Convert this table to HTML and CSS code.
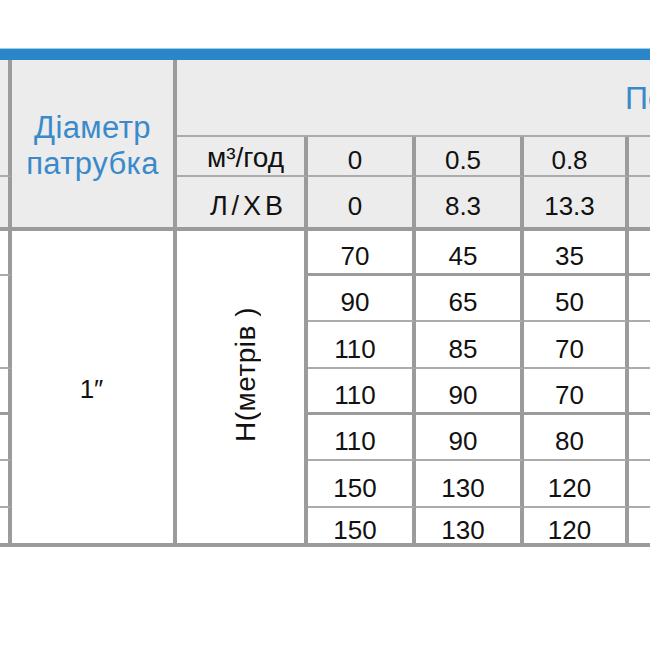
FILE: index.html
```html
<!DOCTYPE html>
<html lang="uk">
<head>
<meta charset="utf-8">
<title>Таблиця характеристик</title>
<link rel="stylesheet" href="styles.css">
</head>
<body>
<div class="sheet">
  <div class="bar"></div>
  <div class="grid">
    <!-- header -->
    <div class="cell hd c0 rh12 thin"></div>
    <div class="cell hd diam">Діаметр<br>патрубка</div>
    <div class="cell hd title thin">Подача</div>

    <div class="cell hd unit thin">м³/год</div>
    <div class="cell hd num thin">0</div>
    <div class="cell hd num thin">0.5</div>
    <div class="cell hd num thin">0.8</div>
    <div class="cell hd num thin"></div>

    <div class="cell hd c0 thick"></div>
    <div class="cell hd unit lpm thick">л/хв</div>
    <div class="cell hd num thick">0</div>
    <div class="cell hd num thick">8.3</div>
    <div class="cell hd num thick">13.3</div>
    <div class="cell hd num thick"></div>

    <!-- body -->
    <div class="cell c0 thin r4"></div>
    <div class="cell size">1″</div>
    <div class="cell head"><span class="vert">H(метрів )</span></div>
    <div class="cell num mid">70</div>
    <div class="cell num mid">45</div>
    <div class="cell num mid">35</div>
    <div class="cell num mid"></div>

    <div class="cell c0 thin r56"></div>
    <div class="cell num thin">90</div>
    <div class="cell num thin">65</div>
    <div class="cell num thin">50</div>
    <div class="cell num thin"></div>

    <div class="cell num thin">110</div>
    <div class="cell num thin">85</div>
    <div class="cell num thin">70</div>
    <div class="cell num thin"></div>

    <div class="cell c0 mid"></div>
    <div class="cell num mid">110</div>
    <div class="cell num mid">90</div>
    <div class="cell num mid">70</div>
    <div class="cell num mid"></div>

    <div class="cell c0 thin"></div>
    <div class="cell num thin">110</div>
    <div class="cell num thin">90</div>
    <div class="cell num thin">80</div>
    <div class="cell num thin"></div>

    <div class="cell c0 thin"></div>
    <div class="cell num thin">150</div>
    <div class="cell num thin">130</div>
    <div class="cell num thin">120</div>
    <div class="cell num thin"></div>

    <div class="cell c0 thick"></div>
    <div class="cell num thick">150</div>
    <div class="cell num thick">130</div>
    <div class="cell num thick">120</div>
    <div class="cell num thick"></div>
  </div>
</div>
</body>
</html>
```

FILE: styles.css
```css
html, body {
  margin: 0;
  padding: 0;
  background: #ffffff;
}

body {
  font-family: "Liberation Sans", Arial, sans-serif;
  color: #111111;
}

.sheet {
  width: 650px;
  overflow: hidden;
  margin-top: 48px;
}

.bar {
  width: 737px;
  height: 11px;
  background: #2a86c7;
  border-top: 1px solid #8ed4f0;
}

.grid {
  display: grid;
  width: 737px;
  grid-template-columns: 12px 165px 131px 108px 108px 105px 108px;
  grid-template-rows: 77px 40px 54px 45px 46px 47px 46px 46px 47px 39px;
}

.cell {
  box-sizing: border-box;
  display: flex;
  align-items: center;
  justify-content: center;
  border-right: 4px solid #9b9b9b;
  background: #ffffff;
  font-size: 26px;
  line-height: 1;
}

.hd {
  background: #ececec;
}

.thin {
  border-bottom: 2px solid #ababab;
}

.mid {
  border-bottom: 3px solid #9b9b9b;
}

.thick {
  border-bottom: 4px solid #9b9b9b;
}

.rh12 {
  grid-row: 1 / 3;
}

.r4 {
  grid-row: 4;
}

.r56 {
  grid-row: 5 / 7;
}

.c0 {
  grid-column: 1;
}

.diam {
  grid-column: 2;
  grid-row: 1 / 4;
  border-bottom: 4px solid #9b9b9b;
  color: #3a8acb;
  font-size: 31px;
  letter-spacing: 0.4px;
  line-height: 36px;
  text-align: center;
  padding-top: 4px;
}

.title {
  grid-column: 3 / 8;
  grid-row: 1;
  justify-content: flex-start;
  padding-left: 448px;
  color: #3a8acb;
  font-size: 32px;
  border-right: none;
}

.unit {
  grid-column: 3;
  font-size: 28px;
  padding-left: 10px;
  padding-top: 4px;
}

.lpm {
  text-transform: uppercase;
  font-size: 27px;
  letter-spacing: 4px;
  padding-left: 16px;
  padding-top: 8px;
}

.num {
  padding-right: 10px;
  padding-top: 8px;
}

.size {
  grid-column: 2;
  grid-row: 4 / 11;
  border-bottom: 4px solid #9b9b9b;
  padding-top: 4px;
  padding-right: 2px;
}

.head {
  grid-column: 3;
  grid-row: 4 / 11;
  border-bottom: 4px solid #9b9b9b;
  padding-bottom: 24px;
  padding-left: 10px;
}

.vert {
  writing-mode: vertical-rl;
  transform: rotate(180deg);
  font-size: 28px;
  letter-spacing: 0.5px;
}
```
